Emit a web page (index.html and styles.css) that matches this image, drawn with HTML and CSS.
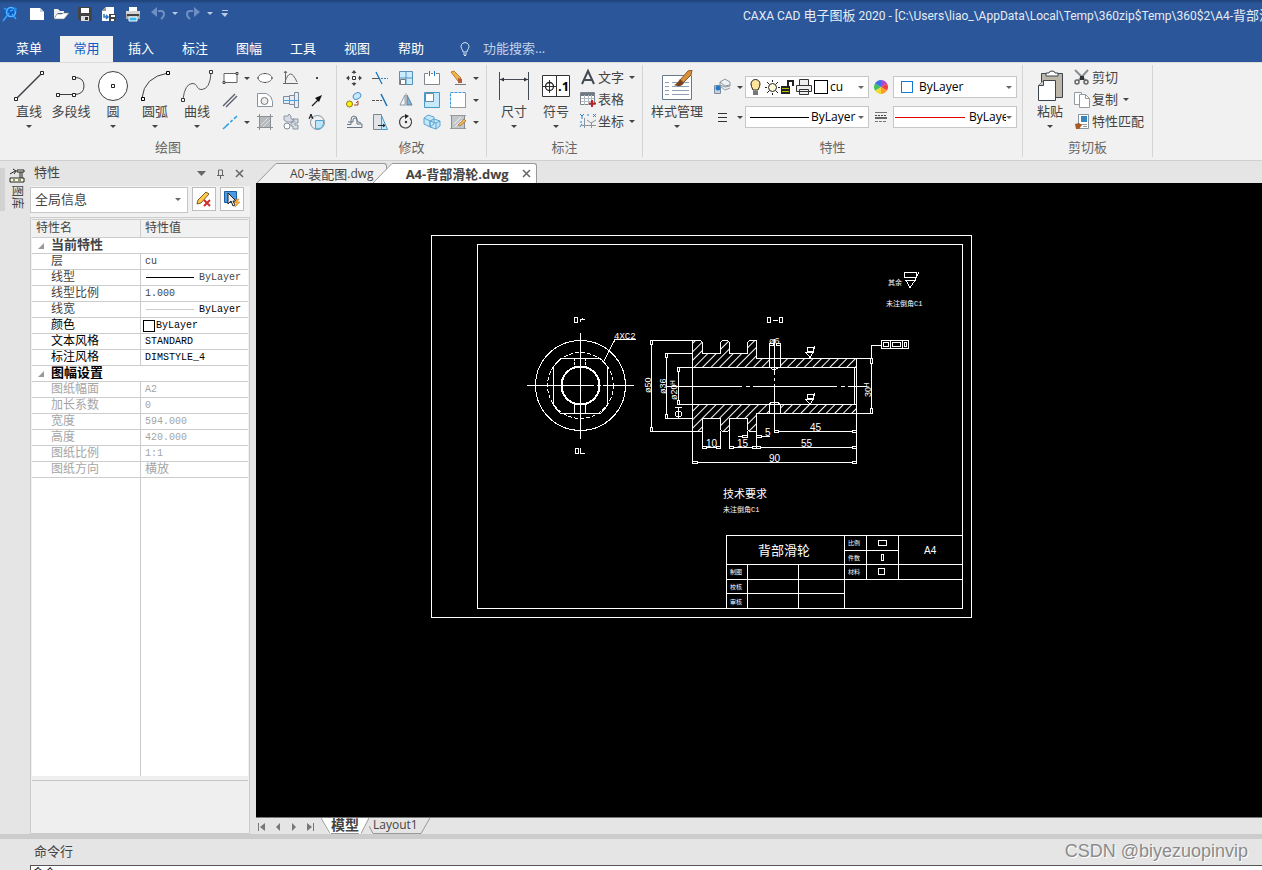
FILE: index.html
```html
<!DOCTYPE html>
<html lang="zh-CN">
<head>
<meta charset="utf-8">
<title>CAXA CAD 电子图板 2020</title>
<link rel="stylesheet" href="styles.css">
</head>
<body>
<header class="titlebar">
  <div class="title-row">
    <svg class="logo" width="16" height="18" viewBox="0 0 16 18" aria-hidden="true"><path d="M1 2l4 2 5-3 4 3-1 6-4 4-3-2-4 4 1-6-2-3z" fill="#0d5cc4"/><circle cx="9" cy="7" r="4.5" fill="none" stroke="#5bb8ff" stroke-width="1.6"/><path d="M1 16l6-8M2 3l4 3M8 6l3-1M10 9l4 5" stroke="#38a2ff" stroke-width="1.5" fill="none"/><path d="M11 2l4 1-1 4" fill="#1987ef"/></svg>
    <div class="quick">
      <button aria-label="新建"><svg width="16" height="16"><path d="M1 2h10l4 4v8H1z" fill="#fff"/><path d="M11 2v4h4z" fill="#c9d0da"/></svg></button>
      <button aria-label="打开"><svg width="16" height="16"><path d="M1 13V3h4l2 2h4v2H5z" fill="#eee"/><path d="M4 8h5l1-1h6l-5 6H1z" fill="#fff" stroke="#7b7b7b" stroke-width=".6"/></svg></button>
      <button aria-label="保存"><svg width="16" height="16"><path d="M1 1h14v14H3l-2-2z" fill="#444"/><path d="M4 2h8v5H4z" fill="#fff"/><path d="M4 10h8v5H4z" fill="#ddd"/><path d="M8 11h3v3H8z" fill="#333"/></svg></button>
      <button aria-label="另存为"><svg width="16" height="16"><path d="M1 15V5l4-4h8v14z" fill="#fff"/><path d="M1 5l4-4v4z" fill="#999"/><path d="M3 8v3h4M5 9l2 2-2 2" fill="none" stroke="#2878cc" stroke-width="1.5"/><path d="M8 8h7v7H8z" fill="#444"/><path d="M10 9h4v2h-4zM10 13h3v2h-3z" fill="#fff"/></svg></button>
      <button aria-label="打印"><svg width="16" height="16"><path d="M4 1h8v5H4z" fill="#fff"/><path d="M1 5h14v8H1z" fill="#aaa"/><path d="M1 5h14v3H1z" fill="#d4d4d4"/><path d="M2 8h12v2H2z" fill="#444"/><path d="M4 11h8v4H4z" fill="#39b9ef" stroke="#fff"/></svg></button>
      <button class="undo" aria-label="撤销"><svg width="16" height="16"><path d="M8 5h3q3 0 3 3t-3 5" fill="none" stroke="#6f8fc4" stroke-width="2"/><path d="M1 6l6-5v10z" fill="#6f8fc4"/></svg><svg class="lt" width="6" height="4"><path d="M0 0h6L3 3z"/></svg></button>
      <button class="redo" aria-label="重做"><svg width="16" height="16"><path d="M8 5H5Q2 5 2 8t3 5" fill="none" stroke="#6f8fc4" stroke-width="2"/><path d="M15 6L9 1v10z" fill="#6f8fc4"/></svg><svg class="lt" width="6" height="4"><path d="M0 0h6L3 3z"/></svg></button>
      <button class="more" aria-label="自定义"><svg class="lt" width="8" height="8"><path d="M1 0h6v1H1zM0 3h7L4 7z"/></svg></button>
    </div>
    <h1>CAXA CAD <span class="zh">电子图板</span> 2020 - [C:\Users\liao_\AppData\Local\Temp\360zip$Temp\360$2\A4-<span class="zh">背部滑轮</span>.dwg]</h1>
  </div>
  <nav class="tabs">
    <button class="menu">菜单</button>
    <button class="active">常用</button>
    <button>插入</button>
    <button>标注</button>
    <button>图幅</button>
    <button>工具</button>
    <button>视图</button>
    <button>帮助</button>
    <label class="search"><svg width="12" height="14" viewBox="0 0 12 14"><path d="M4 10q0-2-1.500-3.500a4 4 0 1 1 7 0Q8 8 8 10zM4 12h4M5 13.500h2" fill="none" stroke="#dce6f5"/></svg><input type="text" placeholder="功能搜索..." aria-label="功能搜索"></label>
  </nav>
</header>

<section class="ribbon">
  <div class="group">
    <div class="tools">
      <div class="bigs">
        <button class="big"><svg width="32" height="32"><path d="M3 29L29 3" stroke="#3c3f45" stroke-width="1.500"/><path d="M1.500 27.500h3v3h-3zM27.500 1.500h3v3h-3z" fill="#fff" stroke="#222"/></svg><span>直线</span><i class="dd"></i></button>
        <button class="big"><svg width="32" height="32"><path d="M2 24.500h17q10 0 10-8.500t-9-8.500h-2" fill="none" stroke="#3c3f45"/><path d="M1.500 23.500h3v3h-3zM17.500 23.500h3v3h-3zM17.500 6.500h3v3h-3z" fill="#fff" stroke="#222"/></svg><span>多段线</span></button>
        <button class="big"><svg width="32" height="32"><circle cx="16" cy="16" r="14.500" fill="#fff" stroke="#3c3f45"/><path d="M14.500 14.500h3v3h-3z" fill="#fff" stroke="#222"/></svg><span>圆</span><i class="dd"></i></button>
        <button class="big"><svg width="32" height="32"><path d="M3 28Q5 7 29 3" fill="none" stroke="#3c3f45"/><path d="M2.500 27.500h3v3h-3zM27.500 1.500h3v3h-3z" fill="#fff" stroke="#000"/></svg><span>圆弧</span><i class="dd"></i></button>
        <button class="big"><svg width="32" height="32"><path d="M2 29Q4 14 11 13.500C17 13 15 20 21 19.500Q29 19 30 3" fill="none" stroke="#555a62"/><path d="M.5 28.500h3v3h-3zM28.500.500h3v3h-3z" fill="#fff" stroke="#333"/></svg><span>曲线</span><i class="dd"></i></button>
      </div>
      <div class="smalls draw">
        <button aria-label="矩形"><svg width="20" height="18"><path d="M4 4.500h13v9H4z" fill="#fff" stroke="#666"/><path d="M3 12.500h2v2H3zM16 3.500h2v2h-2z" fill="#fff" stroke="#444"/></svg><i class="dd"></i></button>
        <button aria-label="椭圆"><svg width="18" height="18"><ellipse cx="9" cy="9" rx="7" ry="4.500" fill="#fff" stroke="#777"/><path d="M8 4.500h2M8 13.500h2M2 8v2M16 8v2" stroke="#555"/></svg></button>
        <button aria-label="公式曲线"><svg width="18" height="18"><path d="M3.500 2v13M1 14.500h15M3 13Q8-3 15 13M2 4l1.500-2L5 4" fill="none" stroke="#666"/></svg></button>
        <button aria-label="点"><svg width="18" height="18"><path d="M8 8h2v2H8z" fill="#444"/></svg></button>
        <button aria-label="平行线"><svg width="20" height="18"><path d="M3 15L15 3M6 16L17 5" stroke="#555b66" stroke-width="1.300"/></svg></button>
        <button aria-label="轮廓"><svg width="18" height="18"><path d="M1.500 2.500h9q6 3 6 8v5h-15z" fill="#fff" stroke="#8a93a0"/><circle cx="8.500" cy="10" r="3.500" fill="#eee" stroke="#777"/></svg></button>
        <button aria-label="孔轴"><svg width="18" height="18"><path d="M1.500 5.500h6v7h-6zM7.500 4.500h5v9h-5zM12.500 1.500h4v15h-4z" fill="#e7edf4" stroke="#7f8c9c"/><path d="M1 9.500h16" stroke="#3da3ec"/></svg></button>
        <button aria-label="箭头"><svg width="18" height="18"><path d="M4 15l6-6" stroke="#222" stroke-width="1.300"/><path d="M14 4l-7 3 4 4z" fill="#111"/></svg></button>
        <button aria-label="中心线"><svg width="20" height="18"><path d="M3 16L17 3" stroke="#35a2e4" stroke-width="1.600" stroke-dasharray="8 2 3 2"/></svg><i class="dd"></i></button>
        <button aria-label="填充"><svg width="18" height="18"><path d="M4 4h11v11H4z" fill="#b6babd"/><path d="M1 3.500h16M1 14.500h16M3.500 1v16M14.500 1v16" stroke="#8a9096"/><path d="M5 12l7-7M7 14l7-7" stroke="#ddd"/></svg></button>
        <button aria-label="零件"><svg width="18" height="18"><path d="M2 7V3h4l1-2 2 2v3h3v3H5zM11 6h5v4h-3v2h3v4h-5v-3H9V9h2z" fill="#d7dce5" stroke="#8d98a6"/><circle cx="5" cy="13" r="3" fill="#fff" stroke="#7d8998"/></svg></button>
        <button aria-label="局部放大"><svg width="18" height="18"><circle cx="9.500" cy="9.500" r="7" fill="none" stroke="#7f929f"/><path d="M7.500 7.500h8v3a6 6 0 0 1-8 5z" fill="#bde5fa" stroke="#48a3d4"/><path d="M1 6l2-5 2 5M2 4h2" fill="none" stroke="#111"/></svg></button>
      </div>
    </div>
    <h2>绘图</h2>
  </div>

  <div class="group">
    <div class="tools edit-tools">
      <div class="smalls edit">
        <button aria-label="平移"><svg width="18" height="18"><path d="M7.500 7.500h3v3h-3z" fill="#fff" stroke="#333"/><path d="M9 1l2.500 3h-5zM9 17l2.500-3h-5zM1 9l3-2.500v5zM17 9l-3-2.500v5z" fill="#444"/><path d="M9 3v2M9 13v2M3 9h2M13 9h2" stroke="#444"/></svg></button>
        <button aria-label="裁剪"><svg width="18" height="18"><path d="M1 9.500h8" stroke="#555"/><path d="M10 9.500h7" stroke="#2c83c8" stroke-dasharray="2 1"/><path d="M5 3l6 12" stroke="#1774bd" stroke-width="1.300"/></svg></button>
        <button aria-label="阵列"><svg width="18" height="18"><path d="M2.500 2.500h13v13h-13z" fill="#c9ecff" stroke="#5a8fb8"/><path d="M9 2v14M2 9h14" stroke="#5a8fb8"/><path d="M3.500 10.500h5v5h-5z" fill="#fff" stroke="#777"/></svg></button>
        <button aria-label="打断"><svg width="18" height="18"><path d="M5 4.500H1.500v11h15v-11H13M8 4.500h2" fill="#fff" stroke="#818891"/><path d="M6.500 2v5M11.500 2v5" stroke="#187cc9"/></svg></button>
        <button aria-label="删除"><svg width="18" height="18"><path d="M2 3l3-1 7 7-3 3z" fill="#efb350" stroke="#bd812d"/><path d="M9 9l4 1v4H9z" fill="#b75c3c"/><path d="M6 15.500h11" stroke="#777"/></svg></button><i class="dd"></i>
        <button aria-label="平移复制"><svg width="18" height="18"><ellipse cx="12" cy="5" rx="4" ry="3" fill="#c5e7fa" stroke="#4a94c6" transform="rotate(-30 12 5)"/><circle cx="4.500" cy="13" r="3" fill="#fff200" stroke="#8e7c1a"/><path d="M9 14h4v-4l-2 2" fill="none" stroke="#a34536"/></svg></button>
        <button aria-label="延伸"><svg width="18" height="18"><path d="M1 9.500h10" stroke="#555" stroke-dasharray="3 1"/><path d="M10 3l6 12" stroke="#1774bd" stroke-width="1.500"/></svg></button>
        <button aria-label="镜像"><svg width="18" height="18"><path d="M8 4v10H3z" fill="#fff" stroke="#8897a6"/><path d="M10 4v10h5z" fill="#7ab5da" stroke="#667f93"/><path d="M9 2v13" stroke="#aaa"/></svg></button>
        <button aria-label="缩放"><svg width="18" height="18"><path d="M1.500 1.500h15v15h-15z" fill="#c5eaff" stroke="#4899cb"/><path d="M2.500 2.500h8v8h-8z" fill="#fff" stroke="#7b848d"/></svg></button>
        <button aria-label="分解"><svg width="18" height="18"><path d="M1.500 1.500h15v15h-15z" fill="#fff" stroke="#3c99d5" stroke-dasharray="3 1"/><path d="M16.500 2v14.500H2" fill="none" stroke="#999"/></svg></button><i class="dd"></i>
        <button aria-label="等距线"><svg width="18" height="18"><path d="M2 11.500h4V7q0-4 3-4t3 4q0 2 4 3M2 14.500h15V11h-5V7q0-2-2-2T8 7v2H3" fill="none" stroke="#667483"/></svg></button>
        <button aria-label="拉伸"><svg width="18" height="18"><path d="M2.500 1.500h8v15h-8z" fill="#e0e4e8" stroke="#7a8793"/><path d="M10.500 2.500l6 14h-6z" fill="#c3e9fe" stroke="#4c9aca"/><path d="M7 12.500h7M12 11l2 1.500-2 1.500" fill="none" stroke="#222"/></svg></button>
        <button aria-label="旋转"><svg width="18" height="18"><path d="M8 3a6 6 0 1 0 5 2" fill="none" stroke="#444" stroke-width="1.200"/><path d="M8 1v5l4-3z" fill="#222"/><circle cx="9" cy="9" r="1.200" fill="#333"/></svg></button>
        <button aria-label="三维"><svg width="18" height="18"><path d="M1 5l4-3 6 2v7l-4 3-6-3zM7 8l4-2 6 2v5l-4 3-6-2zM1 5l6 3v6M7 8l6 2v6M13 10l4-2" fill="#c4e8fb" stroke="#5fa5cf"/></svg></button>
        <button aria-label="编辑填充"><svg width="18" height="18"><path d="M2.500 2.500h13v13h-13z" fill="#c3c7ca" stroke="#868d94"/><path d="M1 2.500h16M1 15.500h16" stroke="#999"/><path d="M5 11l7-7M6 14l7-7" stroke="#eee"/><path d="M9 12l6-6 2 2-6 5z" fill="#f2b65b" stroke="#955f24" stroke-width=".6"/></svg></button><i class="dd"></i>
      </div>
    </div>
    <h2>修改</h2>
  </div>

  <div class="group">
    <div class="tools note-tools">
      <div class="bigs">
        <button class="big"><svg width="32" height="32"><path d="M1.500 2v28M30.500 2v28M2 9.500h28" stroke="#444b57"/><path d="M2 9.500l4-2v4zM30 9.500l-4-2v4z" fill="#333"/></svg><span>尺寸</span><i class="dd"></i></button>
        <button class="big"><svg width="32" height="32"><path d="M2.500 5.500h27v21h-27z" fill="#fff" stroke="#333"/><path d="M16.500 5v22M3 16.500h13M9.500 10v13" stroke="#333"/><circle cx="9.500" cy="16.500" r="4" fill="none" stroke="#222" stroke-width="1.300"/><text x="18" y="21" class="symbol-num">.1</text></svg><span>符号</span><i class="dd"></i></button>
      </div>
      <div class="rows">
        <button><svg width="18" height="18"><path d="M3 16L9 3l6 13M5 12h8" fill="none" stroke="#444b55" stroke-width="2"/></svg>文字<i class="dd"></i></button>
        <button><svg width="18" height="18"><path d="M1.500 2.500h14v12h-14z" fill="#fff" stroke="#7b828b"/><path d="M2 3h13v3H2z" fill="#717984"/><path d="M2 8.500h13M2 11.500h13M5.500 5v10M9.500 5v10M12.500 5v10" stroke="#b3b9c0"/><path d="M13 10v7M10 13.500h7" stroke="#bd242a" stroke-width="2"/></svg>表格</button>
        <button><svg width="18" height="18"><path d="M5.500 6v10M3 13.500h14M8 8l4 3 5-3M12.500 11v5" fill="none" stroke="#8b939c"/><path d="M1 2l2 2 2-2M3 4v3M8 3h2M14 2l3 3M17 2l-3 3M1 10h2M1 15l2-3" stroke="#2784c3" fill="none"/></svg>坐标<i class="dd"></i></button>
      </div>
    </div>
    <h2>标注</h2>
  </div>

  <div class="group">
    <div class="tools prop-tools">
      <div class="bigs">
        <button class="big wide"><svg width="32" height="32"><path d="M1.500 5.500h29v24h-29z" fill="#fff" stroke="#667a8c"/><path d="M4 12.500h4M11 12.500h17M4 16.500h4M11 16.500h17M4 20.500h4M11 20.500h17M4 24.500h4M11 24.500h17" stroke="#8fa0b3"/><path d="M27 1l4-1-1 5-8 8-3-3z" fill="#d7903e" stroke="#8e5623"/><path d="M19 9l4 4q-3 5-10 2 3-1 6-6z" fill="#7b431d"/></svg><span>样式管理</span><i class="dd"></i></button>
      </div>
      <div class="props">
        <button aria-label="图层"><svg width="18" height="18"><path d="M7 4l5-3 5 3v4l-5 1-5-2zM7 8l5 4 5-2M7 4l5 4 5-1" fill="#eef1f4" stroke="#9097a0"/><path d="M1.500 7.500h6v8h-6z" fill="#c6d2df" stroke="#7e8d9e"/><circle cx="5" cy="10" r="2.500" fill="#227ac8"/></svg><i class="dd"></i></button>
        <label class="combo">
          <svg width="64" height="18" viewBox="0 0 64 18"><path d="M3 12Q1 8 1 6a4.500 4.500 0 0 1 9 0q0 2-2 6z" fill="#ffe49a" stroke="#222"/><path d="M3 13h5v4H3z" fill="#777"/><circle cx="22.500" cy="9.500" r="4" fill="#fff8dc" stroke="#222"/><path d="M22.500 2v2M22.500 15v2M15 9.500h2M28 9.500h2M17 4l2 2M26 13l2 2M28 4l-2 2M19 13l-2 2" stroke="#222"/><path d="M31 8h9v8h-9z" fill="#222"/><path d="M38 8V3h5v5" fill="none" stroke="#222" stroke-width="2"/><path d="M32 10.500h7M32 13.500h7" stroke="#b3bf00"/><path d="M49.500 1.500h9v6h-9zM46.500 7.500h15v6h-15zM49.500 11.500h9v5h-9z" fill="#eee" stroke="#333"/></svg>
          <b class="swatch black"></b>
          <select aria-label="当前图层"><option>cu</option></select><i class="dd"></i>
        </label>
        <svg class="mid" width="16" height="16" viewBox="0 0 16 16"><path d="M8 8V1a7 7 0 0 1 6 3.500z" fill="#b047d5"/><path d="M8 8l6-3.500a7 7 0 0 1 0 7z" fill="#f04141"/><path d="M8 8l6 3.500A7 7 0 0 1 8 15z" fill="#ff9c2a"/><path d="M8 8v7a7 7 0 0 1-6-3.500z" fill="#edda32"/><path d="M8 8l-6 3.500a7 7 0 0 1 0-7z" fill="#3fc25b"/><path d="M8 8L2 4.500A7 7 0 0 1 8 1z" fill="#3e72e4"/></svg>
        <label class="combo"><b class="swatch blue"></b><select aria-label="颜色"><option>ByLayer</option></select><i class="dd"></i></label>
        <button aria-label="线型"><svg width="18" height="18"><path d="M5 5.500h9M5 9.500h9M5 13.500h9" stroke="#333"/></svg><i class="dd"></i></button>
        <label class="combo"><b class="line black-line"></b><select aria-label="线型"><option>ByLayer</option></select><i class="dd"></i></label>
        <svg class="mid" width="16" height="16"><path d="M2 3.500h12" stroke="#777"/><path d="M2 6.500h12" stroke="#444" stroke-dasharray="2 1"/><path d="M2 9h12" stroke="#666" stroke-width="2"/><path d="M2 12.500h12" stroke="#777" stroke-dasharray="3 1"/></svg>
        <label class="combo"><b class="line red-line"></b><select aria-label="线宽"><option>ByLayer</option></select><i class="dd"></i></label>
      </div>
    </div>
    <h2>特性</h2>
  </div>

  <div class="group">
    <div class="tools clip-tools">
      <div class="bigs">
        <button class="big"><svg width="32" height="32"><path d="M7.500 3.500h21v24h-21z" fill="#bcb6a9" stroke="#3d444c"/><path d="M12 6V3h3q0-2 3-2t3 2h3v3z" fill="#fff" stroke="#3d444c"/><path d="M4.500 15.500l5-5h12v20h-17z" fill="#fff" stroke="#3d444c"/><path d="M4.500 15.500h5v-5" fill="#ccc" stroke="#3d444c"/></svg><span>粘贴</span><i class="dd"></i></button>
      </div>
      <div class="rows">
        <button><svg width="18" height="18"><path d="M2 2l11 11M15 2L5 13" stroke="#8b9095" stroke-width="2"/><path d="M7 8h4v4H7z" fill="#333"/><circle cx="4" cy="14" r="2" fill="none" stroke="#666" stroke-width="1.500"/><circle cx="13" cy="14" r="2" fill="none" stroke="#666" stroke-width="1.500"/></svg>剪切</button>
        <button><svg width="18" height="18"><path d="M1.500 2.500h7v12h-7z" fill="#fff" stroke="#939aa1"/><path d="M6.500 4.500h6l4 4v9h-10z" fill="#fff" stroke="#939aa1"/><path d="M12.500 4.500v4h4" fill="none" stroke="#939aa1"/></svg>复制<i class="dd"></i></button>
        <button><svg width="18" height="18"><path d="M5.500 2.500h10v14h-10z" fill="#fff" stroke="#8293a2"/><path d="M8 4h6v6H8z" fill="#3685bd"/><path d="M7 12.500h7M10 14.500h4" stroke="#999"/><path d="M2 12l4-1 3 2-3 4H3z" fill="#a75a22"/></svg>特性匹配</button>
      </div>
    </div>
    <h2>剪切板</h2>
  </div>
</section>

<main class="work">
  <aside class="dock">
    <button class="library"><svg width="16" height="16"><path d="M1 6l5-3M4 1l3 2-2 3M8 2h7v2H8zM11 4v6M13 4v6M1 10h14v4H1zM4 12h2M9 12h3" fill="#fbffd9" stroke="#222"/></svg><span>图库</span></button>
  </aside>

  <section class="panel">
    <div class="panel-head">
      <h2>特性</h2>
      <button aria-label="菜单"><svg width="10" height="6"><path d="M0 0h9L4.500 5z" fill="#666"/></svg></button>
      <button aria-label="固定"><svg width="10" height="10"><path d="M2.500 6V1h4v5M6.500 1v5M1 6.500h7M4.500 7v3" fill="none" stroke="#666"/></svg></button>
      <button aria-label="关闭"><svg width="10" height="10"><path d="M1 1l7 7M8 1L1 8" stroke="#666" stroke-width="1.500"/></svg></button>
    </div>
    <div class="panel-pick">
      <label class="combo filter"><select aria-label="选择对象"><option>全局信息</option></select><i class="dd"></i></label>
      <button aria-label="清除"><svg width="18" height="18"><path d="M2 14l1-4 8-8 3 2-8 9z" fill="#ffc94c" stroke="#7b5a22"/><path d="M9 10l6 6M15 10l-6 6" stroke="#d12e2d" stroke-width="2"/></svg></button>
      <button aria-label="选择"><svg width="18" height="18"><path d="M1.500 1.500h12v11h-12z" fill="#4b9ae1" stroke="#1b60a5"/><path d="M5 3v11l3-3 2 5 2-1-2-4h3z" fill="#eee" stroke="#222"/><path d="M14 9l-3 4h3l-2 4 5-5h-3l2-3z" fill="#ffb52d" stroke="#c47915" stroke-width=".5"/></svg></button>
    </div>
    <div class="sheet">
      <table>
        <thead><tr><th>特性名</th><th>特性值</th></tr></thead>
        <tbody>
          <tr class="sec"><td colspan="2">当前特性</td></tr>
          <tr><td>层</td><td>cu</td></tr>
          <tr><td>线型</td><td><span class="sample"><b></b>ByLayer</span></td></tr>
          <tr><td>线型比例</td><td>1.000</td></tr>
          <tr class="strong-val"><td>线宽</td><td><span class="sample pale"><b></b>ByLayer</span></td></tr>
          <tr class="strong"><td>颜色</td><td><span class="chip"><b></b>ByLayer</span></td></tr>
          <tr class="strong"><td>文本风格</td><td>STANDARD</td></tr>
          <tr class="strong"><td>标注风格</td><td>DIMSTYLE_4</td></tr>
          <tr class="sec strong"><td colspan="2">图幅设置</td></tr>
          <tr class="off"><td>图纸幅面</td><td>A2</td></tr>
          <tr class="off"><td>加长系数</td><td>0</td></tr>
          <tr class="off"><td>宽度</td><td>594.000</td></tr>
          <tr class="off"><td>高度</td><td>420.000</td></tr>
          <tr class="off"><td>图纸比例</td><td>1:1</td></tr>
          <tr class="off"><td>图纸方向</td><td class="zh-val">横放</td></tr>
          <tr class="fill"><td></td><td></td></tr>
        </tbody>
      </table>
      <div class="hint"></div>
    </div>
  </section>

  <section class="doc">
    <div class="doc-tabs">
      <button class="doc-tab"><svg width="19" height="20"><path d="M0 20L19 .5V20z" fill="#f0f0f0"/><path d="M0 20L19 .5" stroke="#999"/></svg><span class="cap">A0-<span class="zh">装配图</span>.dwg</span></button>
      <button class="doc-tab current"><svg width="19" height="20"><path d="M0 20L19 .5V20z" fill="#fff"/><path d="M0 20L19 .5" stroke="#999"/></svg><span class="cap">A4-背部滑轮.dwg<svg width="9" height="9"><path d="M1 1l7 7M8 1L1 8" stroke="#666" stroke-width="1.500"/></svg></span></button>
    </div>
    <div class="canvas">
      <svg class="cad" viewBox="256 183 1006 634" role="img" aria-label="A4-背部滑轮">
        <defs><pattern id="hatch" width="6" height="6" patternUnits="userSpaceOnUse" patternTransform="rotate(45)"><path d="M.5 0v6" stroke="#fff"/></pattern></defs>
        <g class="ln">
          <path d="M431.500 235.500h540v382h-540zM477.500 244.500h485v364h-485z"/>
          <circle cx="580.500" cy="385.500" r="45"/>
          <circle cx="580.500" cy="385.500" r="33" stroke-dasharray="4 2"/>
          <circle cx="580.500" cy="385.500" r="19" stroke-width="2"/>
          <path d="M560.500 358.500h40l7 8v39l-7 8h-40l-7-8v-39zM527 385.500h67M597 385.500h3M603 385.500h31M580.500 333v106M574.500 404v9M585.500 404v9"/>
          <path d="M574.500 358v9M585.500 358v9" stroke-dasharray="3 1"/>
          <path d="M603 363l12-23.500h21M574.500 317.500h3v5h-3zM580.500 322v-3h4M582.500 318v2M575.500 448.500h3v5h-3zM580.500 448v5h4"/>
          <path class="hatched" d="M692.500 340.500h8l2 2v11h18v-11l2-2h5l2 2v11h18v-11l2-2h7v18h13v9h-77zM780.500 358.500h76v9h-76zM692.500 404.500h77v9h-13v18h-7l-2-2v-11h-18v11l-2 2h-5l-2-2v-11h-18v13h-10zM780.500 404.500h76v9h-76z"/>
          <path d="M692.500 340v122M856.500 358v104M854.500 367v37M692 367.500h162M692 404.500h162M769.500 343v24M780.500 343v24M769 367l5 3 6-3M769.500 404v9M780.500 404v9M769 404l3-2h5l3 2M769 358.500h11M769 413.500h11"/>
          <path d="M666 386.500h76M746 386.500h4M753 386.500h84M841 386.500h4M848 386.500h19"/>
          <path d="M774.500 339v36M774.500 378v3M774.500 384v48" />
          <path d="M650 340.500h43M650 431.500h43M666 353.500h27M666 418.500h27M678 367.500h15M678 404.500h15M651.500 340v91M666.500 353v65M678.500 367v37M678.500 407v11M675 407.500h7"/>
          <circle cx="678.500" cy="414" r="3"/>
          <path d="M856 358.500h16M856 413.500h17M871.500 345v68M871 345.500h10M881.500 340.500h27v8h-27zM890.500 340v8M902.500 340v8M883.500 342.500h5v4h-5zM892.500 342.500h8v4h-8zM904.500 342.500h2v4h-2z"/>
          <path d="M702.500 419v29M720.500 431v17M729.500 419v29M747.500 431v6M756.500 413v35M702 447.500h18M729 447.500h127M738 436.500h9M756 436.500h14M774 431.500h82M692 462.500h164"/>
          <path class="ends" d="M650.500 340.500h2v4h-2zM650.500 427.500h2v4h-2zM665.500 353.500h2v4h-2zM665.500 414.500h2v4h-2zM677.500 367.500h2v4h-2zM677.500 400.500h2v4h-2zM870.500 358.500h2v5h-2zM870.500 408.500h2v5h-2zM702.500 446.500h4v2h-4zM716.500 446.500h4v2h-4zM729.500 446.500h4v2h-4zM752.500 446.500h4v2h-4zM756.500 446.500h4v2h-4zM852.500 446.500h4v2h-4zM774.500 430.500h4v2h-4zM852.500 430.500h4v2h-4zM692.500 461.500h5v2h-5zM852.500 461.500h4v2h-4zM742.500 435.500h5v2h-5zM756.500 435.500h5v2h-5zM769.500 343.500h4v2h-4zM776.500 343.500h4v2h-4z"/>
          <path d="M807.500 347.500h6v4h-6zM806 352.500h7l-3 5zM813 352l2-6M807.500 394.500h6v4h-6zM806 399.500h7l-3 5zM813 399l2-6M904.500 272.500h12v5h-12zM906 280.500h9l-5 7zM914 282l5-10M767.500 317.500h3v5h-3zM779.500 317.500h3v5h-3zM773 320.500h5"/>
          <path d="M726.500 535.500h236v73h-236zM726 564.500h236M726 579.500h236M726 593.500h118M844 550.500h54M747.500 564v44M798.500 564v44M844.500 535v73M866.500 535v44M898.500 535v44M878.500 540.500h8v5h-8zM881.500 554.500h2v6h-2zM878.500 568.500h6v6h-6z"/>
        </g>
        <g class="dim">
          <text x="614" y="339" class="code">4XC2</text>
          <text x="706" y="447">10</text><text x="737" y="447">15</text><text x="765" y="436">5</text>
          <text x="810" y="431">45</text><text x="801" y="447">55</text><text x="769" y="462">90</text>
          <text x="769" y="344" class="sm">ø6</text>
          <text transform="translate(651 393) rotate(-90)" class="sm">ø50</text>
          <text transform="translate(666 394) rotate(-90)" class="sm">ø36</text>
          <text transform="translate(677 400) rotate(-90)" class="sm">ø20ᴴ</text>
          <text transform="translate(871 397) rotate(-90)" class="sm">30ᴴ</text>
          <text x="924" y="554">A4</text>
        </g>
        <g class="cjk">
          <text x="888" y="285" class="t7">其余</text>
          <text x="886" y="306" class="t7">未注倒角C1</text>
          <text x="723" y="498" class="t11">技术要求</text>
          <text x="723" y="512" class="t7">未注倒角C1</text>
          <text x="758" y="555" class="t13">背部滑轮</text>
          <text x="848" y="545" class="t6">比例</text><text x="848" y="560" class="t6">件数</text><text x="848" y="574" class="t6">材料</text>
          <text x="730" y="574" class="t6">制图</text><text x="730" y="589" class="t6">校核</text><text x="730" y="604" class="t6">审核</text>
        </g>
      </svg>
    </div>
    <div class="sheets">
      <div class="pager">
        <button aria-label="首页"><svg width="8" height="8"><path d="M.5 0v8" stroke="#777"/><path d="M7 0v8L2 4z" fill="#777"/></svg></button>
        <button aria-label="上一页"><svg width="8" height="8"><path d="M6 0v8L2 4z" fill="#777"/></svg></button>
        <button aria-label="下一页"><svg width="8" height="8"><path d="M2 0v8l4-4z" fill="#777"/></svg></button>
        <button aria-label="末页"><svg width="8" height="8"><path d="M7.500 0v8" stroke="#777"/><path d="M1 0v8l5-4z" fill="#777"/></svg></button>
      </div>
      <button class="sheet-tab model"><svg width="10" height="16"><path d="M0 0h10v16H8z" fill="#fff"/><path d="M0 0l9 15.500" stroke="#999"/></svg><span>模型</span><svg width="10" height="16"><path d="M0 0h10L2 16H0z" fill="#fff"/><path d="M10 0L2 15.500" stroke="#999"/></svg></button>
      <button class="sheet-tab"><svg width="4" height="16"><path d="M0 8l4 7.500" stroke="#999"/></svg><span>Layout1</span><svg width="12" height="16"><path d="M12 0L3 15.500H0" fill="none" stroke="#999"/></svg></button>
    </div>
  </section>
</main>

<footer class="command">
  <div class="command-head"><h2>命令行</h2><span class="mark">CSDN @biyezuopinvip</span></div>
  <div class="log">命令:</div>
</footer>
</body>
</html>
```

FILE: styles.css
```css
* { box-sizing: border-box; }
html, body { height: 100%; }
body {
  margin: 0;
  display: flex;
  flex-direction: column;
  overflow: hidden;
  background: #e5e5e5;
  color: #444;
  font: 13px/18px "Open Sans", "Noto Sans CJK SC", sans-serif;
}
h1, h2 { margin: 0; font-size: 13px; font-weight: 400; }
button, select, input {
  margin: 0; padding: 0; border: 0; background: none;
  color: inherit; font: inherit; border-radius: 0;
}
svg { display: block; flex: none; }
i, b { display: block; flex: none; }
.zh { font-size: 13px; }

/* small drop-down triangle */
.dd {
  width: 0; height: 0;
  border: 3px solid transparent;
  border-top-color: #444;
  border-bottom: 0;
}

/* title bar */
.titlebar {
  flex: none;
  background: linear-gradient(#1f4278, #2b579a 4px);
  color: #fff;
}
.title-row { display: flex; align-items: center; height: 30px; padding: 0 0 2px 2px; overflow: hidden; }
.quick { flex: none; display: flex; padding-left: 7px; width: 725px; }
.quick button { display: flex; align-items: center; justify-content: center; width: 24px; height: 20px; }
.quick .undo, .quick .redo { width: 35px; gap: 6px; padding-left: 2px; }
.quick .more { width: 20px; }
.lt { fill: #bccbe3; }
.title-row h1 {
  flex: none;
  padding-top: 4px;
  color: #e6ecf5;
  font: 12px/20px Roboto, "Noto Sans CJK SC", sans-serif;
  white-space: nowrap;
}
.tabs { display: flex; height: 32px; padding-top: 6px; }
.tabs button { width: 54px; padding-bottom: 3px; }
.tabs .menu { width: 58px; margin-right: 2px; }
.tabs .active { width: 53px; margin-right: 1px; background: #f1f1f1; color: #0b5fcb; }
.search { display: flex; align-items: center; gap: 12px; padding-left: 21px; }
.search input { width: 90px; padding-bottom: 2px; color: #fff; outline: 0; }
.search input::placeholder { color: #c3d1e8; opacity: 1; }

/* ribbon */
.ribbon { flex: none; display: flex; background: #f1f1f1; border-top: 1px solid #dcdcdc; border-bottom: 1px solid #d0d0d0; padding: 2px 0 3px; }
.group { border-right: 1px solid #d4d4d4; }
.group h2 { line-height: 20px; text-align: center; color: #666; }
.tools { display: flex; height: 72px; padding: 2px 6px 0 8px; }
.bigs { display: flex; padding-top: 3px; }
.big { display: flex; flex-direction: column; align-items: center; width: 42px; white-space: nowrap; }
.big span { line-height: 18px; }
.big .dd { margin-top: 5px; }
.big.wide { width: 56px; }
.smalls { display: grid; grid-auto-rows: 22px; align-items: center; }
.smalls button { display: flex; align-items: center; justify-content: center; height: 22px; }
.smalls .dd { margin-left: 4px; }
.draw { grid-template-columns: 34px 26px 26px 26px; }
.draw button:nth-child(4n+1) { justify-content: flex-start; padding-left: 2px; }
.edit { grid-template-columns: repeat(5, 26px) 12px; }
.tools.edit-tools { padding: 2px 3px 0 4px; }
.edit-tools .smalls .dd { margin-left: 2px; }
.rows { display: flex; flex-direction: column; padding-left: 2px; }
.rows button { display: flex; align-items: center; gap: 1px; height: 22px; padding-bottom: 2px; white-space: nowrap; }
.rows .dd { margin-left: 4px; }
.symbol-num { font: bold 13px "Open Sans", sans-serif; fill: #000; }
.tools.note-tools { padding: 2px 7px 0 6px; }
.tools.prop-tools { padding: 2px 5px 0 6px; }
.props { display: grid; grid-template-columns: 32px 124px 24px 124px; grid-template-rows: 22px 22px; row-gap: 8px; padding: 9px 0 0 8px; align-items: center; }
.props > button { display: flex; align-items: center; gap: 6px; }
.mid { justify-self: center; }
.combo { display: flex; align-items: center; height: 22px; padding: 0 4px; background: #fff; border: 1px solid #c6c6c6; color: #000; font-size: 12px; min-width: 0; overflow: hidden; }
.combo select { appearance: none; flex: 1 1 0; min-width: 0; overflow: hidden; text-overflow: clip; }
.combo .dd { border-top-color: #666; }
.swatch { width: 14px; height: 14px; border: 1px solid #000; background: #fff; margin-right: 2px; }
.swatch.blue { width: 12px; height: 12px; border-color: #1679cf; margin: 0 6px 0 3px; }
.line { height: 1px; background: #000; }
.black-line { width: 59px; margin-right: 2px; }
.red-line { width: 70px; margin: 0 4px 0 -3px; background: #e00000; }
.tools.clip-tools { padding: 2px 8px 0 6px; }

/* work area */
.work { flex: 1; display: flex; min-height: 0; border-bottom: 5px solid #ccc; }
.dock { width: 30px; padding-top: 7px; }
.library { display: flex; flex-direction: column; align-items: flex-start; gap: 1px; width: 100%; height: 43px; padding-left: 4px; border-left: 5px solid #d2d2d2; }
.library span { writing-mode: vertical-rl; text-orientation: sideways; font-size: 12px; line-height: 16px; }
.panel { display: flex; flex-direction: column; width: 220px; margin-right: 6px; }
.panel-head { display: flex; align-items: center; gap: 9px; height: 25px; padding: 0 5px 0 4px; }
.panel-head h2 { flex: 1; padding-bottom: 3px; }
.panel-head button { width: 10px; }
.panel-pick { display: flex; gap: 4px; height: 31px; padding: 1px 6px 3px 0; background: #f1f1f1; }
.filter { flex: 1; height: 26px; font-size: 13px; color: #444; padding: 0 6px 2px 4px; }
.panel-pick button { display: flex; align-items: center; justify-content: center; width: 24px; height: 24px; background: #fff; border: 1px solid #bdbdbd; }
.sheet { flex: 1; display: grid; grid-template-rows: 1fr 56px; min-height: 0; border: 1px solid #ccc; background: #efefef; padding: 1px; }
table { width: 100%; border-collapse: separate; border-spacing: 0; table-layout: fixed; background: #fff; font: 10px/14px "Liberation Mono", "Noto Sans CJK SC", monospace; }
th, td { height: 16px; padding: 0; border-bottom: 1px solid #ccc; text-align: left; font-weight: 400; white-space: nowrap; }
th { height: 19px; padding-left: 4px; background: #f1f1f1; border-top: 1px solid #ccc; font-size: 12px; }
th:first-child { width: 109px; border-right: 1px solid #ccc; }
td:first-child { padding-left: 19px; border-right: 1px solid #ccc; font-size: 12px; }
td + td { padding-left: 4px; }
.sec td:first-child { border-right: 0; font-size: 13px; font-weight: 700; padding-left: 6px; }
.sec td::before { content: ""; display: inline-block; margin-right: 7px; border: 3px solid #999; border-top-color: transparent; border-left-color: transparent; }
.strong, .strong-val td + td { color: #000; }
.off { color: #a5a5a5; }
.zh-val { font-size: 12px; }
.fill td { height: auto; border-bottom: 0; }
.sample, .chip { display: flex; align-items: center; }
.sample b { width: 48px; height: 1px; margin: 0 5px 0 1px; background: #000; }
.sample.pale b { background: #ccc; }
.chip b { width: 12px; height: 12px; margin: 0 1px 0 -2px; border: 1px solid #000; }
.hint { margin-top: 4px; border-top: 1px solid #c4c4c4; }

/* drawing area */
.doc { flex: 1; display: flex; flex-direction: column; min-width: 0; }
.doc-tabs { display: flex; height: 22px; padding: 2px 0 0 1px; }
.doc-tab { display: flex; font-size: 12px; }
.cap { display: flex; align-items: center; height: 20px; padding: 0 12px 0 14px; background: #f0f0f0; border-top: 1px solid #999; border-right: 1px solid #999; border-top-right-radius: 3px; }
.current { margin-left: -14px; font-size: 13px; font-weight: 700; }
.current .cap { gap: 13px; padding: 0 5px 0 14px; background: #fff; }
.canvas { flex: 1; min-height: 0; background: #000; }
.cad { width: 100%; height: 100%; }
.ln { fill: none; stroke: #fff; shape-rendering: crispEdges; }
.ln .hatched { fill: url(#hatch); }
.ln .ends { fill: #000; }
.dim { fill: #fff; font: 10px "Liberation Sans", sans-serif; }
.dim .code { font: 9px "Liberation Mono", monospace; }
.dim .sm { font-size: 9px; }
.cjk { fill: #fff; font-family: "Liberation Mono", "Noto Sans CJK SC", monospace; }
.t6 { font-size: 6px; }
.t7 { font-size: 7px; }
.t11 { font-size: 11px; }
.t13 { font-size: 13px; }
.sheets { display: flex; height: 17px; border-top: 1px solid #777; font-size: 12px; line-height: 14px; }
.pager { display: flex; align-items: center; gap: 8px; padding: 2px 7px 0 2px; }
.pager button { width: 8px; }
.sheet-tab { display: flex; height: 16px; }
.sheet-tab span { border-bottom: 1px solid #999; height: 16px; }
.model span { background: #fff; font-size: 14px; font-weight: 700; }

/* command line */
.command { flex: none; padding-left: 30px; }
.command-head { display: flex; align-items: center; justify-content: space-between; height: 26px; padding: 0 14px 2px 4px; }
.mark { color: #8a8a8a; font: 18px/24px "Liberation Sans", sans-serif; text-shadow: 1px 1px 0 #fff; }
.log { height: 5px; padding-left: 1px; overflow: hidden; border-top: 1px solid #555; border-left: 1px solid #555; background: #fff; color: #000; font: 12px/14px "Noto Sans CJK SC", sans-serif; }
```
